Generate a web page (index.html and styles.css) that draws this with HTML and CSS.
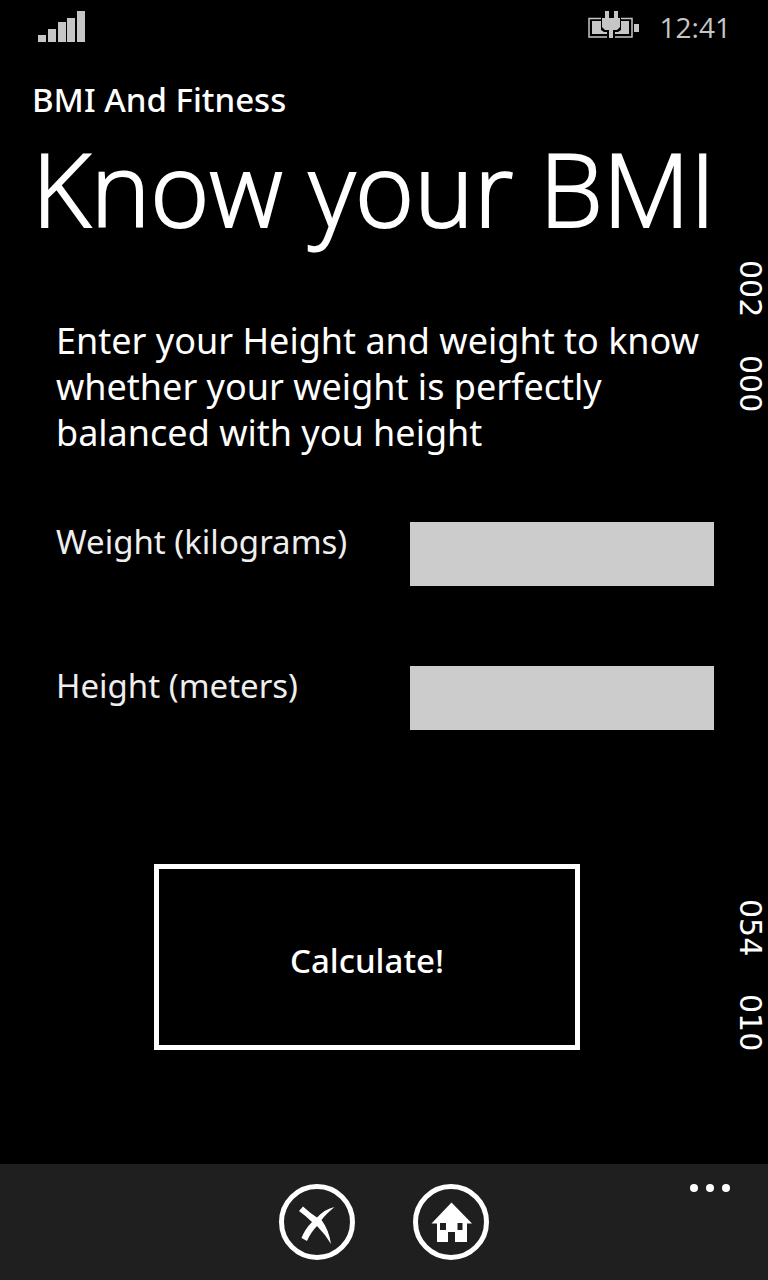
FILE: index.html
```html
<!DOCTYPE html>
<html lang="en">
<head>
<meta charset="utf-8">
<meta name="viewport" content="width=device-width, initial-scale=1">
<title>BMI And Fitness</title>
<link rel="stylesheet" href="styles.css">
</head>
<body>
<div class="phone">
  <div class="status">
    <svg class="signal" viewBox="0 0 48 32" role="img" aria-label="Signal strength">
      <path d="M0 25h8v7H0zM10 19h8v13h-8zM20 12h8v20h-8zM29 8h8v24h-8zM39 1h8v31h-8z"/>
    </svg>
    <div class="status-right">
      <svg class="battery" viewBox="0 0 52 28" role="img" aria-label="Battery charging">
        <path d="M1 8.500h43v18.500H1z" fill="none" stroke="#c6c6c6" stroke-width="1.500"/>
        <path d="M4 11h37v13H4zM46 14h5v8h-5z"/>
        <path d="M13 7h20v13l-3 2h-3v6h-8v-6h-3l-3-2z" fill="#000"/>
        <path d="M17 1h4v7h5V1h4v7h2v9l-3 3h-4v8h-4v-8h-4l-3-3V8h3z"/>
      </svg>
      <time class="clock">12:41</time>
    </div>
  </div>

  <header class="heading">
    <p class="app-name">BMI And Fitness</p>
    <h1 class="title">Know your BMI</h1>
  </header>

  <main class="content">
    <p class="intro">Enter your Height and weight to know whether your weight is perfectly balanced with you height</p>
    <form class="form">
      <div class="field">
        <label class="label" for="weight">Weight (kilograms)</label>
        <input class="input" id="weight" type="text" inputmode="decimal">
      </div>
      <div class="field">
        <label class="label" for="height">Height (meters)</label>
        <input class="input" id="height" type="text" inputmode="decimal">
      </div>
      <button class="calculate" type="button">Calculate!</button>
    </form>
  </main>

  <aside class="counters counters-top"><span>002</span><span>000</span></aside>
  <aside class="counters counters-bottom"><span>054</span><span>010</span></aside>

  <footer class="appbar">
    <button class="icon-button" type="button" aria-label="Cancel">
      <svg class="icon" viewBox="0 0 76 76">
        <path d="M20 27L24 22.500Q31 29 38 33.500Q46 25 55.500 23Q47 30 42.500 36Q50 46 52 60Q46 50 38 42Q32 48 28 57L22.500 54Q26 45 33 38Q27 32 20 27z"/>
      </svg>
    </button>
    <button class="icon-button" type="button" aria-label="Home">
      <svg class="icon" viewBox="0 0 76 76">
        <path fill-rule="evenodd" d="M38.500 18.500L59 39.500H54V58H42V48H35V58H24V39.500H18.500zM27 39V46H33V39zM44.500 39V46H49.500V39z"/>
      </svg>
    </button>
    <button class="more" type="button" aria-label="More">
      <svg class="dots" viewBox="0 0 40 8"><circle cx="4" cy="4" r="4"/><circle cx="20" cy="4" r="4"/><circle cx="36" cy="4" r="4"/></svg>
    </button>
  </footer>
</div>
</body>
</html>
```
FILE: styles.css
```css
* {
  box-sizing: border-box;
}

body {
  margin: 0;
  background: #000;
  color: #fff;
  font-family: "Noto Sans", "Open Sans", sans-serif;
}

button {
  padding: 0;
  background: none;
  color: inherit;
  font-family: inherit;
  cursor: pointer;
}

svg {
  display: block;
  fill: currentColor;
}

.phone {
  position: relative;
  display: flex;
  flex-direction: column;
  min-height: 100vh;
}

.status {
  display: flex;
  justify-content: space-between;
  padding: 10px 37px 0 38px;
  color: #c6c6c6;
}

.signal {
  width: 48px;
  height: 32px;
}

.status-right {
  display: flex;
  gap: 20px;
}

.battery {
  width: 52px;
  height: 28px;
}

.clock {
  font-family: "Open Sans", sans-serif;
  font-size: 28px;
  line-height: 34px;
}

.heading {
  padding: 32px 32px 0;
}

.app-name {
  margin: 0;
  font-size: 33px;
  font-weight: 500;
  line-height: 48px;
}

.title {
  margin: 0;
  font-family: "Open Sans", sans-serif;
  font-size: 101px;
  font-weight: 300;
  line-height: 128px;
  white-space: nowrap;
  -webkit-text-stroke: 2px currentColor;
}

.content {
  flex: 1;
  padding: 66px 54px 0 56px;
}

.intro {
  margin: 0;
  font-size: 36px;
  line-height: 46px;
}

.form {
  display: flex;
  flex-direction: column;
  padding-top: 66px;
}

.field {
  display: flex;
  justify-content: space-between;
  margin-bottom: 80px;
}

.label {
  color: #eee;
  font-size: 33px;
  line-height: 40px;
}

.input {
  width: 304px;
  height: 64px;
  padding: 0 12px;
  border: 0;
  border-radius: 0;
  background: #ccc;
  font-family: inherit;
  font-size: 33px;
}

.calculate {
  width: 426px;
  height: 186px;
  margin: 54px 0 0 98px;
  padding-top: 6px;
  border: 5px solid #fff;
  font-size: 33px;
  font-weight: 500;
}

.counters {
  position: absolute;
  right: 0;
  display: flex;
  gap: 38px;
  font-family: "DejaVu Sans", sans-serif;
  font-size: 30px;
  line-height: 36px;
  writing-mode: vertical-rl;
}

.counters-top {
  top: 260px;
}

.counters-bottom {
  top: 899px;
}

.appbar {
  position: relative;
  display: flex;
  justify-content: center;
  gap: 58px;
  padding: 20px 0;
  background: #1f1f1f;
}

.icon-button {
  width: 76px;
  height: 76px;
  border: 5px solid #fff;
  border-radius: 50%;
}

.icon {
  width: 76px;
  height: 76px;
  margin: -5px;
}

.more {
  position: absolute;
  top: 12px;
  right: 30px;
  padding: 8px;
  border: 0;
}

.dots {
  width: 40px;
  height: 8px;
}
```
